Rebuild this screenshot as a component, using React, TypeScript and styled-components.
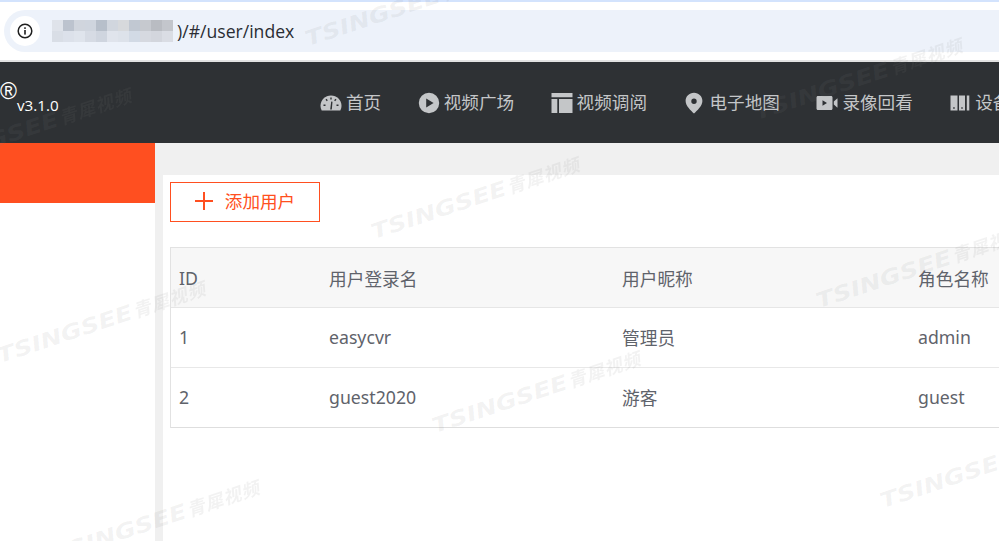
import React from "react";
import styled, { createGlobalStyle } from "styled-components";

const Global = createGlobalStyle`
  html, body { margin: 0; padding: 0; background: #fff; }
  body { font-family: "Noto Sans", "Noto Sans CJK SC", sans-serif; }
`;

const Page = styled.div`
  position: relative;
  width: 100vw;
  height: 100vh;
  overflow: hidden;
  display: flex;
  flex-direction: column;
`;

const BrowserBar = styled.div`
  box-sizing: border-box;
  height: 62px;
  flex: none;
  border-top: 2px solid #d3e3fd;
  border-bottom: 2px solid #e2e2e2;
  padding: 8px 0 8px 4px;
  background: #fff;
`;

const AddressPill = styled.div`
  height: 42px;
  margin-right: -40px;
  border-radius: 21px 0 0 21px;
  background: #edf2fa;
  display: flex;
  align-items: center;
  padding-left: 6px;
`;

const InfoBadge = styled.div`
  width: 30px;
  height: 30px;
  flex: none;
  border-radius: 50%;
  background: #fff;
  display: flex;
  align-items: center;
  justify-content: center;
  margin-right: 10px;
`;

const Mosaic = styled.svg`
  flex: none;
  display: block;
  width: 124px;
  height: 24px;
`;

const UrlText = styled.span`
  font-family: "Open Sans", "Noto Sans", sans-serif;
  font-size: 17.6px;
  line-height: 24px;
  color: #2a2d33;
  white-space: nowrap;
  margin: -1px 0 0 3px;
`;

const Header = styled.header`
  box-sizing: border-box;
  height: 81px;
  flex: none;
  background: #2e3134;
  display: flex;
  align-items: center;
  white-space: nowrap;
`;

const Logo = styled.div`
  width: 320px;
  flex: none;
  height: 100%;
  display: flex;
  align-items: flex-start;
  color: #fff;
  box-sizing: border-box;
  padding-top: 18px;
`;

const Registered = styled.span`
  font-family: "Liberation Sans", sans-serif;
  font-size: 23px;
  line-height: 22px;
  width: 17px;
  flex: none;
`;

const Version = styled.span`
  font-family: "Open Sans", "Noto Sans", sans-serif;
  font-size: 15.2px;
  line-height: 20px;
  margin-top: 15px;
`;

const Nav = styled.nav`
  display: flex;
  align-items: center;
  gap: 36.5px;
`;

const NavItem = styled.a`
  display: flex;
  align-items: center;
  gap: 4px;
  color: #c4c6c8;
  font-family: "Noto Sans CJK SC", sans-serif;
  font-size: 17.6px;
  line-height: 24px;
`;

const NavLabel = styled.span`
  margin-top: -2px;
`;

const NavIcon = styled.svg`
  display: block;
  flex: none;
  width: 22px;
  height: 22px;
  fill: #c4c6c8;
`;

const Body = styled.div`
  flex: 1;
  min-height: 0;
  display: flex;
`;

const Sidebar = styled.aside`
  width: 155px;
  flex: none;
  background: #fff;
`;

const ActiveMenu = styled.div`
  height: 60px;
  background: #ff4f20;
`;

const Main = styled.main`
  flex: 1;
  min-width: 0;
  background: #f0f0f0;
  padding: 32px 0 0 8px;
  display: flex;
`;

const Panel = styled.section`
  flex: 1;
  min-width: 0;
  background: #fff;
  padding: 7px 0 0 7px;
  overflow: hidden;
`;

const AddButton = styled.button`
  box-sizing: border-box;
  width: 150px;
  height: 40px;
  background: #fff;
  border: 1px solid #ff4f20;
  color: #ff4f20;
  padding: 0;
  margin: 0 0 25px;
  display: flex;
  align-items: center;
  justify-content: center;
  gap: 12px;
  font-family: "Noto Sans CJK SC", sans-serif;
  font-size: 17.6px;
  font-weight: 400;
`;

const ButtonLabel = styled.span`
  margin-top: -4px;
`;

const PlusIcon = styled.svg`
  display: block;
  width: 18px;
  height: 18px;
  margin-top: -2px;
  stroke: #ff4f20;
  stroke-width: 2;
`;

const UserTable = styled.table`
  width: 1100px;
  table-layout: fixed;
  border-collapse: separate;
  border-spacing: 0;
  border-top: 1px solid #e2e2e2;
  border-left: 1px solid #e2e2e2;
  color: #5f636b;
  font-family: "Noto Sans", "Noto Sans CJK SC", sans-serif;
  font-size: 17.7px;
`;

const HeadCell = styled.th`
  box-sizing: border-box;
  height: 60px;
  padding: 0 0 0 8px;
  text-align: left;
  font-weight: 400;
  background: #f7f7f7;
  border-bottom: 1px solid #e6e6e6;
`;

const Cell = styled.td`
  box-sizing: border-box;
  height: 60px;
  padding: 0 0 2px 8px;
  border-bottom: 1px solid ${(p: { $last?: boolean }) => (p.$last ? "#dedede" : "#e8e8e8")};
`;

const Watermark = styled.div<{ $x: number; $y: number }>`
  position: absolute;
  left: ${(p) => p.$x}px;
  top: ${(p) => p.$y}px;
  transform: rotate(-18.5deg) scaleX(1.22);
  transform-origin: left bottom;
  display: flex;
  align-items: baseline;
  gap: 1px;
  white-space: nowrap;
  pointer-events: none;
  color: rgba(128, 130, 132, 0.1);
  font-family: "DejaVu Sans", sans-serif;
  font-weight: 700;
  font-style: italic;
  font-size: 21px;
  line-height: 26px;
`;

const WatermarkCjk = styled.span`
  display: inline-block;
  font-family: "Noto Sans CJK SC", sans-serif;
  font-size: 18px;
  letter-spacing: 1px;
  transform: scaleX(0.82);
  transform-origin: left center;
`;

const tiles: [number, number, string][] = [
  [0, 0, "#dfe3ea"], [1, 0, "#bcc3ce"], [2, 0, "#d0d5dd"], [3, 0, "#cfd5de"], [4, 0, "#b7bfca"], [5, 0, "#d1d6de"], [6, 0, "#d7d9dc"], [7, 0, "#c1c8d2"], [8, 0, "#c6c9cf"], [9, 0, "#b9bcc2"], [10, 0, "#c3c6cc"],
  [0, 1, "#d9deE6"], [1, 1, "#dce1ea"], [2, 1, "#dfe4ec"], [3, 1, "#d6dbe4"], [4, 1, "#cfd5df"], [5, 1, "#e0e4ec"], [6, 1, "#dde2ea"], [7, 1, "#d2dae5"], [8, 1, "#d6d9e0"], [9, 1, "#d3d6dd"], [10, 1, "#dadde4"],
];

const columns = ["ID", "用户登录名", "用户昵称", "角色名称", "操作"];
const rows = [
  ["1", "easycvr", "管理员", "admin", ""],
  ["2", "guest2020", "游客", "guest", ""],
];

const marks: [number, number][] = [
  [310, 25], [-72, 149], [759, 99], [376, 218], [821, 287], [2, 342], [437, 412], [56, 541], [885, 487],
];

export default function App() {
  return (
    <Page>
      <Global />
      <BrowserBar>
        <AddressPill>
          <InfoBadge>
            <svg width="16" height="16" viewBox="0 0 16 16" fill="none">
              <circle cx="8" cy="8" r="6.8" stroke="#1f1f1f" strokeWidth="1.5" />
              <rect x="7.2" y="7" width="1.6" height="4.6" fill="#1f1f1f" />
              <rect x="7.2" y="4.3" width="1.6" height="1.6" fill="#1f1f1f" />
            </svg>
          </InfoBadge>
          <Mosaic viewBox="0 0 124 24">
            <defs>
              <filter id="mosaicBlur">
                <feGaussianBlur stdDeviation="0.7" />
              </filter>
            </defs>
            <g filter="url(#mosaicBlur)">
              {tiles.map(([col, row, color]) => (
                <rect key={`${col}-${row}`} x={2 + col * 11} y={1 + row * 11} width={11} height={11} fill={color} />
              ))}
            </g>
          </Mosaic>
          <UrlText>)/#/user/index</UrlText>
        </AddressPill>
      </BrowserBar>
      <Header>
        <Logo>
          <Registered>®</Registered>
          <Version>v3.1.0</Version>
        </Logo>
        <Nav>
          <NavItem>
            <NavIcon viewBox="0 0 22 22">
              <path d="M11 3.500C5.200 3.500.5 8.200.5 13.800c0 1.800.4 3.300 1.200 4.700h18.600c.8-1.400 1.200-2.900 1.200-4.700C21.500 8.200 16.800 3.500 11 3.500z" />
              <path d="M10.200 17.500l1-8 1.300.2-.7 7.800zM3.500 12.500h2v1.400h-2zM16.500 12.500h2v1.400h-2zM5.500 7.800l1-1 1.300 1.400-1 1zM10.300 5.500h1.400v2h-1.400zM15.500 6.800l1 1-1.400 1.400-1-1z" fill="#2e3134" />
            </NavIcon>
            <NavLabel>首页</NavLabel>
          </NavItem>
          <NavItem>
            <NavIcon viewBox="0 0 22 22">
              <path fillRule="evenodd" d="M11 .8a10.200 10.200 0 1 0 0 20.400A10.200 10.200 0 0 0 11 .8zM8.200 6.600l7.400 4.400-7.400 4.400z" />
            </NavIcon>
            <NavLabel>视频广场</NavLabel>
          </NavItem>
          <NavItem>
            <NavIcon viewBox="0 0 22 22">
              <path d="M.5 1h21v4.200H.5zM.5 7h5.800v14H.5zM8 7h13.500v14H8z" />
            </NavIcon>
            <NavLabel>视频调阅</NavLabel>
          </NavItem>
          <NavItem>
            <NavIcon viewBox="0 0 22 22">
              <path fillRule="evenodd" d="M11 .8c-4.800 0-8.400 3.600-8.400 8.300 0 5 5.500 9.800 8.400 12.500 2.900-2.700 8.400-7.500 8.400-12.500C19.400 4.400 15.800.8 11 .8zm0 5.700a2.700 2.700 0 1 1 0 5.400 2.700 2.700 0 0 1 0-5.400z" />
            </NavIcon>
            <NavLabel>电子地图</NavLabel>
          </NavItem>
          <NavItem>
            <NavIcon viewBox="0 0 22 22">
              <path fillRule="evenodd" d="M2 4h13c1 0 1.500.6 1.500 1.500v11c0 .9-.5 1.500-1.500 1.500H2c-1 0-1.500-.6-1.500-1.500v-11C.5 4.600 1 4 2 4zm4.500 4.300v5.400l4.500-2.700z" />
              <path d="M17.800 9.500l3.700-3.300v9.600l-3.700-3.300z" />
            </NavIcon>
            <NavLabel>录像回看</NavLabel>
          </NavItem>
          <NavItem>
            <NavIcon viewBox="0 0 22 22">
              <path fillRule="evenodd" d="M1.500 3.500h7v15h-7zM4.200 15.200h1.500v1.500H4.200z" />
              <path fillRule="evenodd" d="M10 3.500h6v15h-6zM12.300 15.200h1.400v1.500h-1.400z" />
              <path d="M17.800 3.500h2.500v15h-2.500z" />
            </NavIcon>
            <NavLabel>设备管理</NavLabel>
          </NavItem>
        </Nav>
      </Header>
      <Body>
        <Sidebar>
          <ActiveMenu />
        </Sidebar>
        <Main>
          <Panel>
            <AddButton>
              <PlusIcon viewBox="0 0 18 18">
                <path d="M0 9h18M9 0v18" />
              </PlusIcon>
              <ButtonLabel>添加用户</ButtonLabel>
            </AddButton>
            <UserTable>
              <colgroup>
                <col width="150" />
                <col width="293" />
                <col width="296" />
                <col width="200" />
                <col width="160" />
              </colgroup>
              <thead>
                <tr>
                  {columns.map((c) => (
                    <HeadCell key={c}>{c}</HeadCell>
                  ))}
                </tr>
              </thead>
              <tbody>
                {rows.map((r, i) => (
                  <tr key={r[0]}>
                    {r.map((v, j) => (
                      <Cell key={j} $last={i === rows.length - 1}>
                        {v}
                      </Cell>
                    ))}
                  </tr>
                ))}
              </tbody>
            </UserTable>
          </Panel>
        </Main>
      </Body>
      {marks.map(([x, y]) => (
        <Watermark key={`${x}-${y}`} $x={x} $y={y}>
          TSINGSEE<WatermarkCjk>青犀视频</WatermarkCjk>
        </Watermark>
      ))}
    </Page>
  );
}
